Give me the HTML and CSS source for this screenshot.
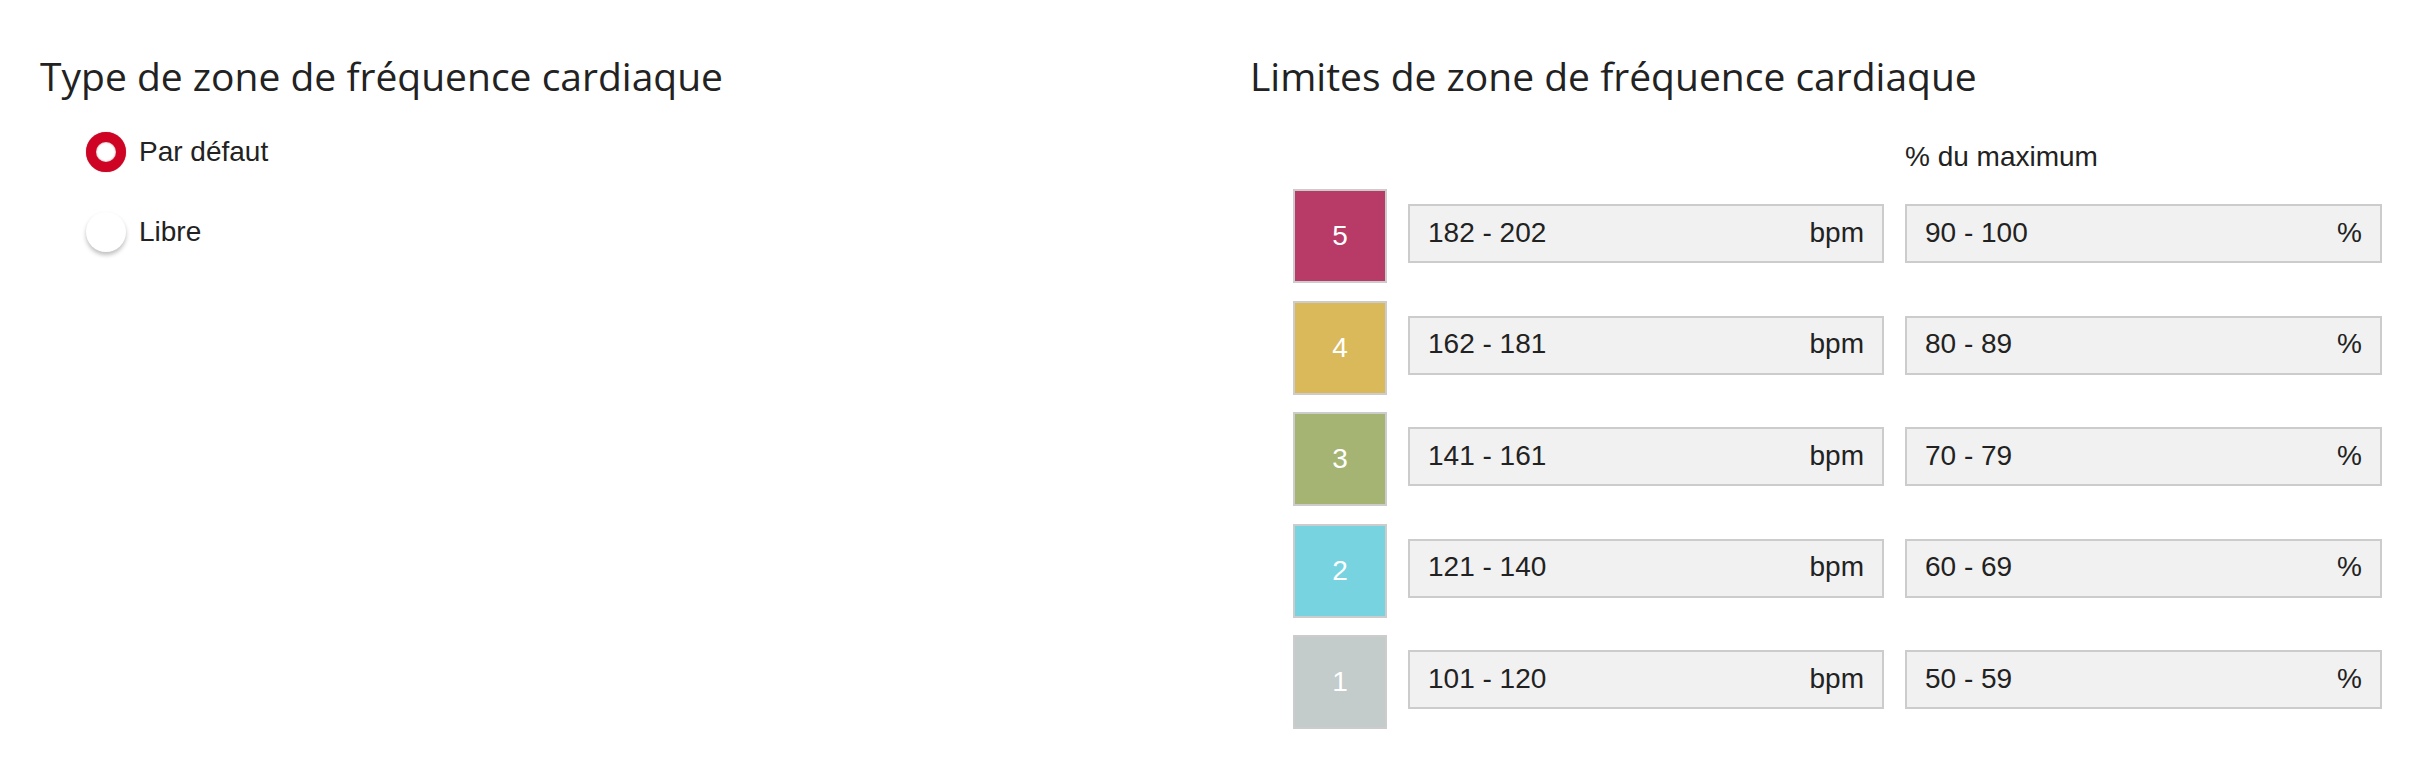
FILE: index.html
```html
<!doctype html>
<html lang="fr">
<head>
<meta charset="UTF-8">
<title>Zones de fréquence cardiaque</title>
<link rel="stylesheet" href="styles.css">
</head>
<body>
<div class='page'>
	<div class='col'>
		<h2>Type de zone de fréquence cardiaque</h2>
		<ul class='choices'>
			<li><label><input type="radio" name="type" checked>Par défaut</label></li>
			<li><label><input type="radio" name="type">Libre</label></li>
		</ul>
	</div>
	<div class='col'>
		<h2>Limites de zone de fréquence cardiaque</h2>
		<p class='head'>% du maximum</p>
		<ul class='zones'>
			<li>
				<span class='swatch z5'>5</span>
				<div class='field bpm'><span>182 - 202</span><span>bpm</span></div>
				<div class='field pct'><span>90 - 100</span><span>%</span></div>
			</li>
			<li>
				<span class='swatch z4'>4</span>
				<div class='field bpm'><span>162 - 181</span><span>bpm</span></div>
				<div class='field pct'><span>80 - 89</span><span>%</span></div>
			</li>
			<li>
				<span class='swatch z3'>3</span>
				<div class='field bpm'><span>141 - 161</span><span>bpm</span></div>
				<div class='field pct'><span>70 - 79</span><span>%</span></div>
			</li>
			<li>
				<span class='swatch z2'>2</span>
				<div class='field bpm'><span>121 - 140</span><span>bpm</span></div>
				<div class='field pct'><span>60 - 69</span><span>%</span></div>
			</li>
			<li>
				<span class='swatch z1'>1</span>
				<div class='field bpm'><span>101 - 120</span><span>bpm</span></div>
				<div class='field pct'><span>50 - 59</span><span>%</span></div>
			</li>
		</ul>
	</div>
</div>
</body>
</html>
```

FILE: styles.css
```css
*{ margin:0; padding:0; box-sizing:border-box;}
ul,li{list-style-type:none;}
body{
	font-family:"Liberation Sans",Arial,sans-serif;
	color:#222;
	background:#fff;
}
.page{
	display:grid;
	grid-template-columns:1210px 1fr;
	padding:49px 0 0 40px;
}
h2{
	font-family:"Open Sans",sans-serif;
	font-weight:normal;
	font-size:39px;
	line-height:54px;
	color:#222;
}
/* radios */
.choices{
	margin:29px 0 0 46px;
}
.choices li{
	display:flex;
	align-items:center;
	height:40px;
	margin-bottom:40px;
}
.choices label{
	display:flex;
	align-items:center;
	gap:13px;
	font-size:28px;
	cursor:pointer;
}
.choices input{
	appearance:none;
	-webkit-appearance:none;
	width:40px;
	height:40px;
	border-radius:50%;
	background:#fff;
	box-shadow:0 3px 4px rgba(0,0,0,.25);
	cursor:pointer;
}
.choices input:checked{
	border:10px solid #cf0425;
	box-shadow:inset 0 0 2px rgba(90,0,10,.5),0 0 1px rgba(120,0,20,.6);
}
/* zones */
.head{
	margin-top:38px;
	padding-left:655px;
	font-size:28px;
	line-height:32px;
}
.zones{
	display:flex;
	flex-direction:column;
	gap:17.5px;
	margin-top:16px;
	padding-left:43px;
}
.zones li{
	display:flex;
	align-items:flex-start;
	gap:21px;
}
.swatch{
	display:flex;
	align-items:center;
	justify-content:center;
	width:94px;
	height:94px;
	border:2px solid #ccc;
	color:#fff;
	font-size:28px;
}
.z5{background-color:#b83a66;}
.z4{background-color:#d9b95a;}
.z3{background-color:#a5b472;}
.z2{background-color:#77d3e0;}
.z1{background-color:#c3cbcb;}
.field{
	display:flex;
	align-items:center;
	justify-content:space-between;
	height:59px;
	margin-top:15px;
	padding:0 18px 2px;
	border:2px solid #ccc;
	background-color:#f1f1f1;
	font-size:28px;
}
.bpm{width:476px;}
.pct{width:477px;}
```
